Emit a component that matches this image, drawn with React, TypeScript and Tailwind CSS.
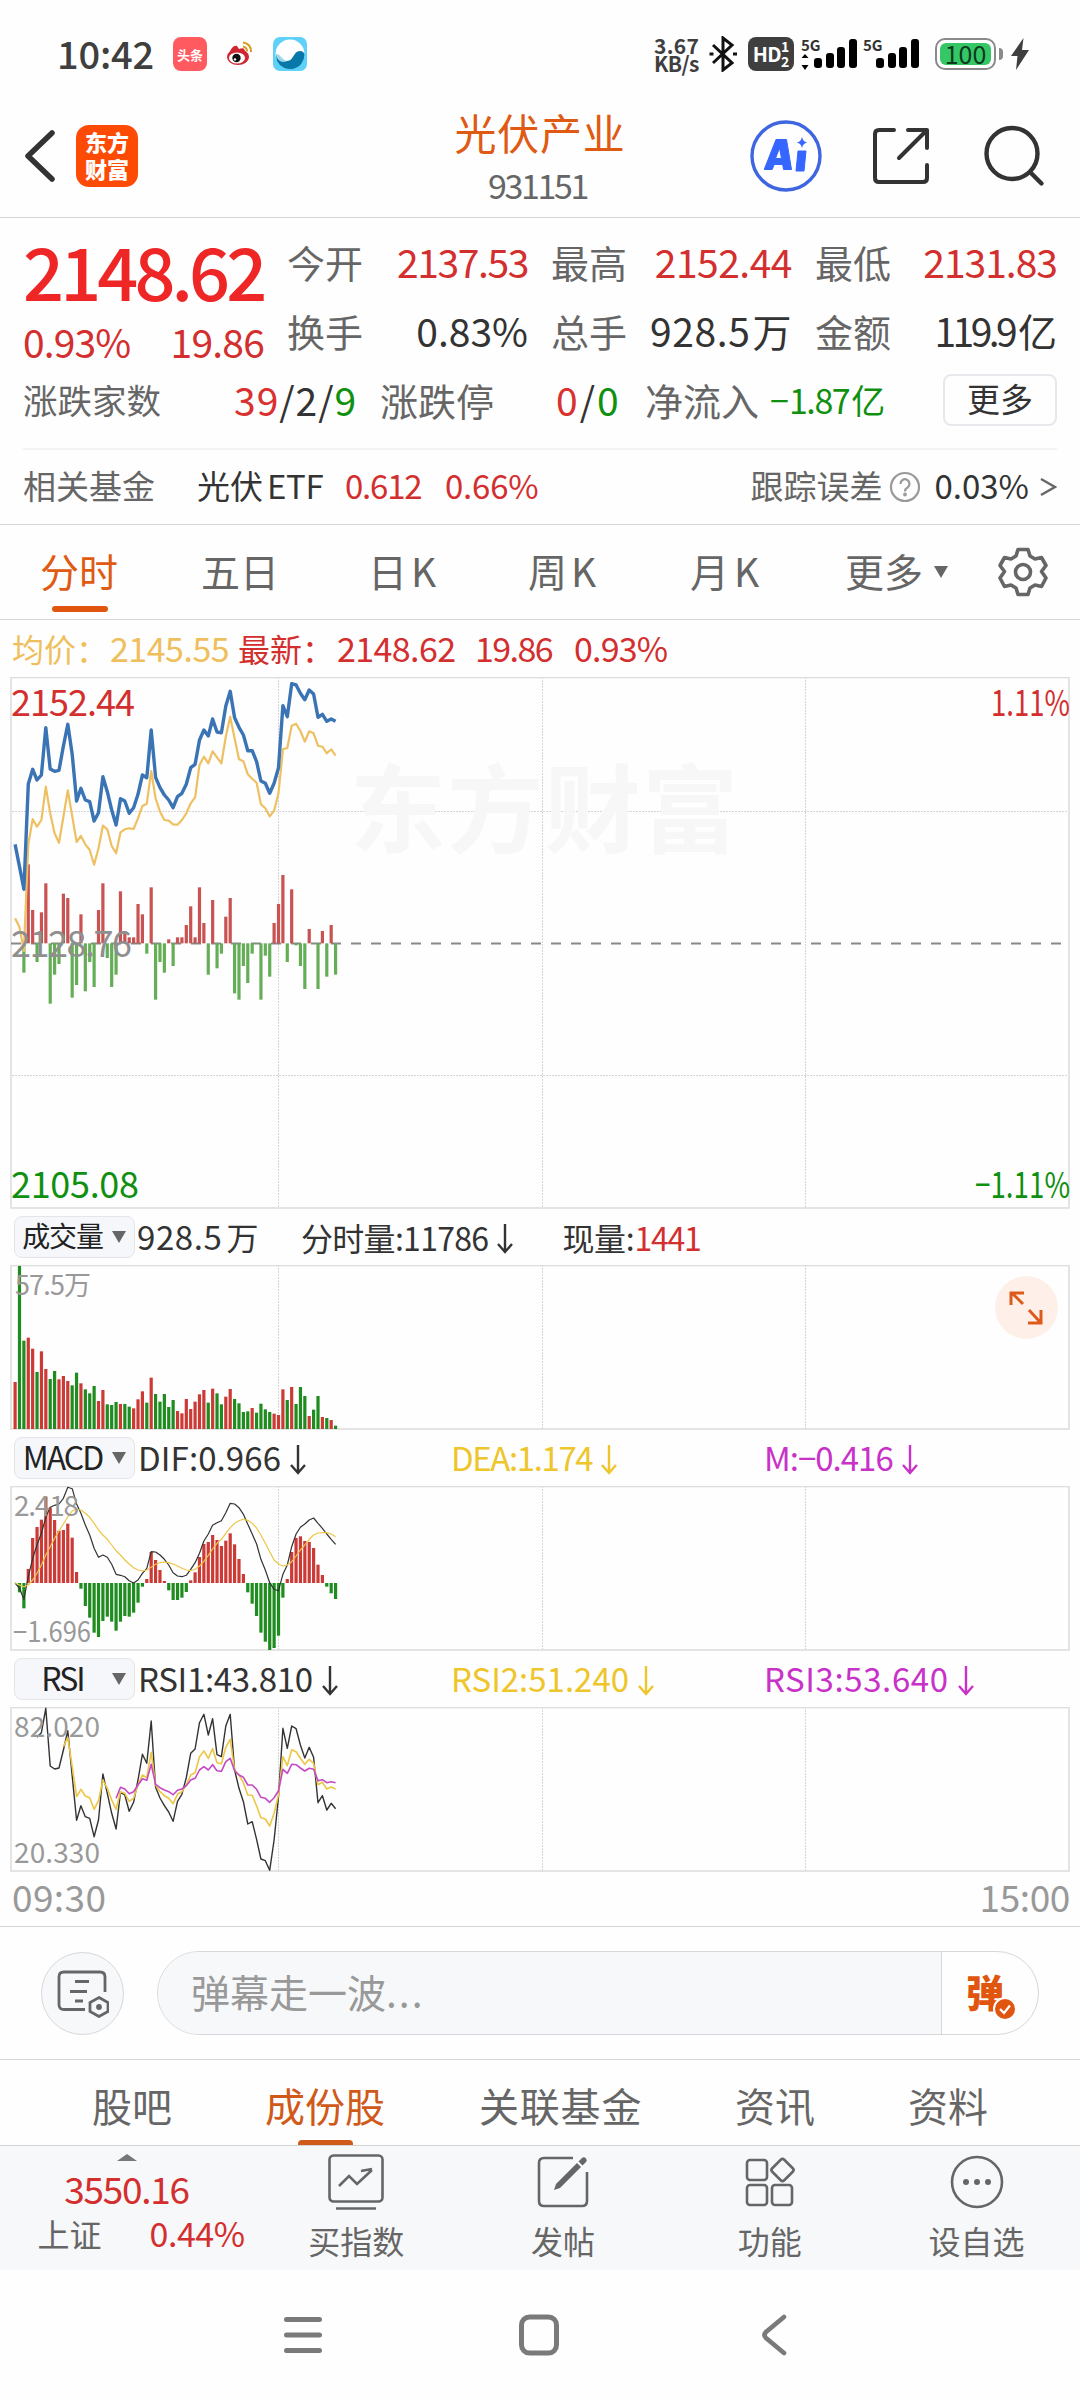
import type { ReactNode } from 'react'
import clsx from 'clsx'

const RED = '#cc3a36'
const GREEN = '#1e8c1e'

// chart samples, one per minute since 09:30, in thirds of a pixel
const PRICE = [523, 590, 658, 342, 298, 330, 315, 173, 297, 304, 301, 228, 163, 253, 393, 355, 390, 395, 453, 428, 320, 365, 420, 465, 386, 393, 430, 413, 373, 315, 323, 180, 322, 353, 375, 390, 413, 380, 370, 343, 293, 283, 210, 180, 198, 147, 186, 188, 108, 64, 143, 172, 195, 242, 242, 275, 333, 340, 370, 340, 293, 107, 140, 41, 45, 70, 89, 60, 72, 142, 133, 154, 147, 154]
const AVERAGE = [745, 772, 843, 523, 447, 470, 450, 350, 430, 490, 518, 440, 361, 438, 516, 498, 523, 540, 584, 535, 467, 478, 528, 550, 487, 478, 475, 477, 445, 408, 401, 303, 385, 425, 450, 452, 463, 464, 450, 430, 400, 382, 285, 260, 280, 244, 262, 280, 200, 140, 205, 268, 274, 313, 326, 338, 403, 415, 439, 422, 370, 238, 234, 167, 161, 183, 215, 184, 190, 227, 230, 250, 238, 257]
const DELTA = [820, 820, 908, 583, 720, 876, 727, 640, 1001, 914, 882, 671, 684, 983, 945, 733, 964, 876, 951, 720, 640, 864, 951, 914, 664, 783, 802, 802, 702, 733, 851, 652, 989, 876, 908, 808, 888, 802, 802, 765, 709, 802, 652, 759, 914, 690, 895, 851, 740, 684, 970, 989, 888, 939, 851, 820, 989, 857, 920, 759, 702, 615, 876, 658, 826, 888, 957, 777, 820, 957, 783, 920, 765, 914]
const VOLUME = [576, 228, 452, 443, 476, 546, 484, 537, 567, 543, 568, 558, 573, 586, 548, 580, 598, 610, 588, 633, 600, 643, 645, 636, 642, 642, 650, 655, 628, 604, 638, 563, 612, 635, 612, 651, 630, 663, 670, 627, 657, 635, 613, 600, 638, 596, 610, 643, 620, 597, 627, 640, 666, 664, 654, 668, 641, 658, 666, 671, 675, 598, 630, 591, 642, 591, 618, 678, 659, 618, 681, 684, 690, 707]
const VOLUME_SIDE = 'rggrrgrrggrrrggrgggrrgggrggrrrgrgggggrrrrrrrgrggrrggggrggggrrrgrgggrggrgrg'
const MACD = [459, 487, 535, 417, 324, 291, 269, 200, 233, 270, 302, 300, 281, 323, 426, 476, 528, 563, 608, 621, 573, 560, 575, 602, 575, 558, 560, 548, 518, 470, 447, 366, 390, 420, 453, 481, 510, 510, 503, 486, 451, 427, 381, 342, 336, 315, 330, 348, 332, 310, 343, 387, 432, 487, 521, 558, 608, 635, 660, 654, 617, 503, 447, 366, 324, 319, 333, 336, 354, 404, 435, 470, 490, 507]
const DIF = [459, 475, 508, 440, 385, 345, 310, 262, 232, 226, 222, 205, 172, 176, 222, 250, 285, 315, 355, 382, 375, 382, 403, 433, 436, 440, 452, 459, 450, 430, 415, 365, 366, 375, 388, 405, 428, 438, 440, 436, 418, 398, 370, 333, 312, 286, 278, 272, 248, 220, 222, 233, 253, 283, 312, 342, 388, 420, 458, 478, 482, 433, 405, 350, 312, 292, 282, 270, 264, 280, 295, 312, 328, 343]
const DEA = [459, 465, 470, 465, 450, 430, 405, 375, 350, 325, 303, 282, 260, 243, 238, 240, 250, 262, 280, 300, 315, 328, 345, 362, 375, 390, 402, 413, 420, 423, 420, 412, 403, 398, 396, 398, 402, 408, 415, 420, 422, 418, 408, 394, 376, 357, 340, 328, 310, 293, 280, 272, 268, 271, 280, 294, 315, 340, 365, 390, 402, 408, 405, 395, 378, 360, 345, 328, 315, 309, 308, 308, 312, 320]
const RSI1 = [262, 248, 175, 348, 357, 354, 300, 242, 378, 511, 467, 500, 505, 560, 510, 372, 430, 490, 537, 427, 435, 484, 457, 390, 313, 340, 213, 412, 444, 467, 486, 514, 454, 433, 383, 310, 297, 218, 193, 255, 206, 314, 320, 228, 193, 360, 415, 455, 522, 515, 568, 627, 632, 661, 570, 440, 235, 295, 228, 236, 285, 324, 292, 322, 458, 437, 480, 460, 476]
const RSI2 = [290, 262, 350, 440, 418, 438, 443, 478, 452, 390, 415, 450, 478, 425, 430, 454, 445, 405, 375, 383, 307, 405, 425, 437, 445, 461, 433, 425, 405, 375, 368, 320, 303, 325, 296, 338, 341, 292, 268, 360, 375, 398, 435, 436, 468, 503, 507, 528, 490, 435, 320, 347, 299, 305, 325, 343, 328, 340, 404, 397, 417, 411, 417]
const RSI3 = [445, 412, 417, 431, 425, 405, 386, 391, 343, 403, 413, 420, 425, 434, 421, 417, 407, 390, 385, 360, 350, 360, 344, 362, 364, 335, 325, 362, 375, 382, 405, 405, 418, 442, 445, 457, 443, 422, 358, 370, 343, 344, 354, 363, 355, 358, 392, 389, 398, 395, 398]

const xAt = (i: number) => 15.1 + i * 4.39

interface SeriesProps {
    data: number[]
    top: number
    from?: number
    color: string
    width: number
}

function Series({ data, top, from = 0, color, width }: SeriesProps) {
    const points = data.map((v, i) => `${xAt(i + from).toFixed(1)},${(v / 3 - top).toFixed(1)}`).join(' ')
    return <polyline points={points} fill="none" stroke={color} strokeWidth={width} strokeLinejoin="round" />
}

interface BarsProps {
    data: number[]
    top: number
    base: number
    up: string
    down: string
    side?: string
}

function Bars({ data, top, base, up, down, side }: BarsProps) {
    return (
        <>
            {data.map((v, i) => {
                const isUp = side ? side[i] === 'r' : v < base
                return (
                    <rect
                        key={i}
                        x={xAt(i) - 1.6}
                        y={Math.min(v, base) / 3 - top}
                        width={3.2}
                        height={Math.abs(v - base) / 3}
                        fill={isUp ? up : down}
                    />
                )
            })}
        </>
    )
}

function Chart({ height, rows = [], children }: { height: number; rows?: number[]; children: ReactNode }) {
    return (
        <svg width="1080" height={height} viewBox={`0 0 1080 ${height}`} className="block shrink-0">
            <g stroke="#d4d4d4" strokeWidth="1" strokeDasharray="2 1">
                {[278.5, 542.5, 805.5].map((x) => (
                    <line key={x} x1={x} x2={x} y1="0" y2={height} />
                ))}
                {rows.map((y) => (
                    <line key={y} x1="12" x2="1068" y1={y} y2={y} />
                ))}
            </g>
            <rect x="11" y="0.5" width="1058" height={height - 1.5} fill="none" stroke="#dedede" strokeWidth="1.6" />
            {children}
        </svg>
    )
}

function StatusBar() {
    return (
        <div className="flex h-[108px] items-center pl-[57px] pr-[51px]">
            <span className="w-[116px] pb-[2px] text-[38px] font-medium leading-none tracking-[-0.2px] text-[#3f3f3f]">10:42</span>
            <div className="flex h-[34px] w-[34px] items-center justify-center rounded-[8px] bg-[#ff5a60] text-[13px] font-bold leading-none text-white">
                头条
            </div>
            <svg width="28" height="26" viewBox="0 0 28 26" className="ml-[19px]">
                <ellipse cx="12" cy="16" rx="11" ry="8" fill="#cf2630" />
                <path d="M3 13 C5 7 8 4 11 5 L13 8 C18 6 19 8 19 12Z" fill="#cf2630" />
                <ellipse cx="11" cy="17" rx="8" ry="5.6" fill="#fff" />
                <circle cx="10.5" cy="17" r="4.2" fill="#111" />
                <circle cx="9" cy="18.4" r="1.2" fill="#fff" />
                <path d="M17 1.5 a8.5 8.5 0 0 1 8 9.5 M17 5.5 a4.5 4.5 0 0 1 4 5" fill="none" stroke="#d99a20" strokeWidth="2" />
            </svg>
            <svg width="34" height="34" viewBox="0 0 34 34" className="ml-[19px]">
                <rect width="34" height="34" rx="7" fill="#5fd0f7" />
                <circle cx="17" cy="17" r="14.5" fill="#fff" />
                <path d="M3 19 C7 17 9 24 14 24 C21 24 20 14 27 14 C30 14 31 16 31.500 17 A14.500 14.500 0 0 1 4 24Z" fill="#0878a8" />
                <path d="M2.600 17 C7 16 9 23 14 24 C9 27 4 23 2.600 17Z" fill="#9ad8ea" />
            </svg>

            <div className="ml-auto flex items-center">
                <div className="flex w-[55px] flex-col text-[21px] font-bold leading-[18px] text-[#3f3f3f]">
                    <span className="tracking-[0.3px]">3.67</span>
                    <span className="tracking-[-0.6px]">KB/s</span>
                </div>
                <svg width="28" height="36" viewBox="0 0 28 36" fill="none" stroke="#111" strokeWidth="3">
                    <path d="M4 9 L23 27 L14 34 V2 L23 9 L4 27" />
                    <path d="M0.500 18 h4 M24 18 h4" />
                </svg>
                <div className="ml-[11px] flex h-[34px] w-[46px] items-center justify-center rounded-[8px] bg-[#3f3f3f] text-white">
                    <span className="pb-[1px] text-[20px] font-bold leading-none tracking-[-0.5px]">HD</span>
                    <span className="text-[14px] font-bold leading-[15px]">1<br />2</span>
                </div>
                <svg width="122" height="34" viewBox="0 0 122 34" className="ml-[7px] overflow-visible" fill="#000">
                    <text x="0" y="13.500" fontSize="15" fontWeight="600" fill="#333">5G</text>
                    <path d="M4 18 l3.500 4 h-7z M4 34 l3.500 -5 h-7z" transform="translate(0 -1)" />
                    <rect x="13" y="21" width="8" height="10" rx="3" />
                    <rect x="25" y="16" width="8" height="15" rx="3" />
                    <rect x="36" y="10" width="8" height="21" rx="3" />
                    <rect x="48" y="2" width="8" height="29" rx="3" />
                    <text x="62" y="13.500" fontSize="15" fontWeight="600" fill="#333">5G</text>
                    <rect x="75" y="21" width="8" height="10" rx="3" />
                    <rect x="87" y="16" width="8" height="15" rx="3" />
                    <rect x="98" y="10" width="8" height="21" rx="3" />
                    <rect x="110" y="2" width="8" height="29" rx="3" />
                </svg>
                <div className="ml-[12px] flex h-[32px] w-[61px] rounded-[10px] border-[2px] border-[#8a8a8a] p-[3px]">
                    <div className="flex h-full w-full items-center justify-center rounded-[6px] bg-[#35c766] pb-[2px] text-[25px] leading-none text-[#0d3a1c]">
                        100
                    </div>
                </div>
                <div className="ml-[3px] h-[12px] w-[4px] rounded-r-full bg-[#8a8a8a]"></div>
                <svg width="18" height="32" viewBox="0 0 18 32" className="ml-[8px]">
                    <path d="M12.500 0 L0 18 h6.500 L5 32 L18 12 h-7z" fill="#3f3f3f" />
                </svg>
            </div>
        </div>
    )
}

function Header() {
    return (
        <div className="relative flex h-[110px] items-center border-b border-[#d4d4d4] pb-[13px] pl-[24px] pr-[35px]">
            <svg width="32" height="52" viewBox="0 0 32 52">
                <path d="M28 3 L4 26 L28 49" fill="none" stroke="#333" strokeWidth="5.500" strokeLinecap="round" strokeLinejoin="round" />
            </svg>
            <div className="ml-[20px] flex h-[62px] w-[62px] flex-col items-center justify-center rounded-[13px] bg-[#fd4a05] pb-[3px] text-[22px] font-black leading-[27px] text-white">
                <span>东方</span>
                <span>财富</span>
            </div>
            <div className="absolute inset-x-0 top-0 flex flex-col items-center">
                <span className="mt-[2px] text-[42px] leading-[44px] tracking-[0.8px] text-[#df5a12]">光伏产业</span>
                <span className="-ml-[5px] mt-[14px] text-[34px] leading-[34px] tracking-[-2.4px] text-[#666]">931151</span>
            </div>
            <svg width="72" height="72" viewBox="0 0 72 72" className="ml-auto">
                <circle cx="36" cy="36" r="34" fill="none" stroke="#3f66e0" strokeWidth="3.400" />
                <path d="M26 19.500 h10.500 l5 30 h-8 l-0.800 -5 h-8.500 l-2 5 h-8z M29.500 28 l-4 10.500 h6z" fill="#3566ff" fillRule="evenodd" stroke="#3566ff" strokeLinejoin="round" />
                <path d="M48 31 h8 l-2 20 h-8z" fill="#3566ff" stroke="#3566ff" strokeLinejoin="round" />
                <path d="M52 17 q1 5 5.500 5.500 q-4.500 0.500 -5.500 5.500 q-1 -5 -5.500 -5.500 q4.500 -0.500 5.500 -5.500z" fill="#3566ff" />
            </svg>
            <svg width="58" height="60" viewBox="0 0 58 60" className="ml-[50px]" fill="none" stroke="#333" strokeWidth="4" strokeLinecap="round" strokeLinejoin="round">
                <path d="M22 4 H7 Q3 4 3 8 V52 Q3 56 7 56 H51 Q55 56 55 52 V39 M36 4 H55 V22 M54 5 L27 32" />
            </svg>
            <svg width="62" height="62" viewBox="0 0 62 62" className="ml-[53px]" fill="none" stroke="#333" strokeWidth="4.400" strokeLinecap="round">
                <circle cx="29" cy="28.500" r="25.500" />
                <path d="M47 47 L58.500 58.500" />
            </svg>
        </div>
    )
}

function Quote() {
    return (
        <div className="h-[306px] px-[23px]">
            <div className="flex h-[150px] pt-[9px]">
                <div className="w-[264px]">
                    <div className="h-[85px] pt-[4px] text-[72px] font-medium leading-[78px] tracking-[-3.9px] text-[#ef2626]">2148.62</div>
                    <div className="flex w-[241px] justify-between text-[39px] leading-[58px] text-[#d32f2f]">
                        <span className="tracking-[-0.9px]">0.93%</span>
                        <span className="tracking-[-0.8px]">19.86</span>
                    </div>
                </div>
                <div className="grid grow grid-cols-[241px_241px_1fr] content-start gap-x-[23px] text-[39px] leading-[69px] text-[#333]">
                    <div className="flex justify-between">
                        <span className="text-[38px] text-[#666]">今开</span>
                        <span className="tracking-[-1.4px] text-[#d32f2f]">2137.53</span>
                    </div>
                    <div className="flex justify-between">
                        <span className="text-[38px] text-[#666]">最高</span>
                        <span className="tracking-[-0.5px] text-[#d32f2f]">2152.44</span>
                    </div>
                    <div className="flex justify-between">
                        <span className="text-[38px] text-[#666]">最低</span>
                        <span className="tracking-[-1px] text-[#d32f2f]">2131.83</span>
                    </div>
                    <div className="flex justify-between">
                        <span className="text-[38px] text-[#666]">换手</span>
                        <span>0.83%</span>
                    </div>
                    <div className="flex justify-between">
                        <span className="text-[38px] text-[#666]">总手</span>
                        <span className="tracking-[0.6px]">928.5<span className="ml-[2px]">万</span></span>
                    </div>
                    <div className="flex justify-between">
                        <span className="text-[38px] text-[#666]">金额</span>
                        <span><span className="tracking-[-3.6px]">119.9</span><span className="ml-[4px]">亿</span></span>
                    </div>
                </div>
            </div>
            <div className="flex h-[66px] items-center pb-[3px] text-[38px] leading-none text-[#666]">
                <span className="w-[211px] text-[34.5px]">涨跌家数</span>
                <span className="w-[146px] text-[39px] tracking-[1px] text-[#333]">
                    <span className="text-[#d93030]">39</span>/2/<span className="text-[#109010]">9</span>
                </span>
                <span className="w-[176px]">涨跌停</span>
                <span className="w-[89px] text-[39px] tracking-[2px] text-[#333]">
                    <span className="text-[#d93030]">0</span>/<span className="text-[#109010]">0</span>
                </span>
                <span className="w-[125px]">净流入</span>
                <span className="text-[34px] text-[#109010]">−<span className="tracking-[-1.4px]">1.87</span><span className="ml-[2px]">亿</span></span>
                <div className="ml-auto flex h-[52px] w-[114px] items-center justify-center rounded-[8px] border-2 border-[#e6e8eb] pb-[3px] text-[33px] text-[#333]">
                    更多
                </div>
            </div>
            <div className="mt-[14px] flex h-[76px] items-center border-t-2 border-[#f3f3f3] pb-[3px] text-[33px] leading-none text-[#666]">
                <span className="w-[174px]">相关基金</span>
                <span className="w-[148px] text-[#333]">光伏<span className="ml-[4px] tracking-[-0.4px]">ETF</span></span>
                <span className="w-[100px] tracking-[-1.2px] text-[#d32f2f]">0.612</span>
                <span className="tracking-[-0.2px] text-[#d32f2f]">0.66%</span>
                <span className="ml-auto">跟踪误差</span>
                <svg width="32" height="32" viewBox="0 0 32 32" className="ml-[7px] mt-[3px]" fill="none" stroke="#999" strokeWidth="2.200">
                    <circle cx="16" cy="16" r="14" />
                    <path d="M11.500 13 a4.500 4.500 0 1 1 7 3.500 q-2.500 1.500 -2.500 4" />
                    <circle cx="16" cy="23.500" r="0.800" />
                </svg>
                <span className="ml-[13px] text-[#333]">0.03%</span>
                <svg width="18" height="20" viewBox="0 0 18 20" className="ml-[10px] mt-[3px]">
                    <path d="M2 2 L16 10 L2 18" fill="none" stroke="#666" strokeWidth="2.400" />
                </svg>
            </div>
        </div>
    )
}

function PeriodTabs() {
    return (
        <div className="flex h-[96px] items-center border-y border-[#d4d4d4] pl-[40px] text-[39px] leading-none text-[#666]">
            <div className="relative w-[161px] pb-[4px] text-[#df5a12]">
                分时
                <div className="absolute -bottom-[18px] left-[12px] h-[6px] w-[56px] rounded-full bg-[#e0560f]"></div>
            </div>
            <span className="w-[167px] pb-[4px]">五日</span>
            <span className="w-[160px] pb-[4px]">日<span className="ml-[4px]">K</span></span>
            <span className="w-[162px] pb-[4px]">周<span className="ml-[4px]">K</span></span>
            <span className="w-[155px] pb-[4px]">月<span className="ml-[5px]">K</span></span>
            <span className="pb-[4px]">更多</span>
            <svg width="14" height="12" viewBox="0 0 14 12" className="ml-[11px]">
                <path d="M0 0 H14 L7 12Z" fill="#666" />
            </svg>
            <svg width="50" height="50" viewBox="0 0 50 50" className="ml-[50px]" fill="none" stroke="#666" strokeWidth="3.600" strokeLinejoin="round">
                <path d="M20 2.500 H30 L32 9 L37 12 L43.500 10.500 L48 18.500 L43.500 24.500 L48 31 L43.500 39.500 L37 38 L32 41 L30 47.500 H20 L18 41 L13 38 L6.500 39.500 L2 31 L6.500 24.500 L2 18.500 L6.500 10.500 L13 12 L18 9Z" />
                <circle cx="25" cy="25" r="7.500" />
            </svg>
        </div>
    )
}

function Down({ color }: { color: string }) {
    return (
        <svg width="18" height="32" viewBox="0 0 18 32" className="mt-[4px] ml-[8px]">
            <path d="M9 1 V29 M2 21 L9 29 L16 21" fill="none" stroke={color} strokeWidth="2.400" />
        </svg>
    )
}

function Pill({ label, small }: { label: string; small?: boolean }) {
    return (
        <div className="flex h-[42px] w-[121px] items-center rounded-[8px] border border-[#e4e5e8] bg-[#f6f7fa] pr-[8px] text-[#222]">
            <span className={clsx('grow pb-[4px] pr-[2px] text-center leading-none', small ? 'text-[28px] tracking-[-1.2px]' : 'text-[32px] tracking-[-2px]')}>
                {label}
            </span>
            <svg width="14" height="12" viewBox="0 0 14 12">
                <path d="M0 0 H14 L7 12Z" fill="#666" />
            </svg>
        </div>
    )
}

function IndicatorRow({ label, small, children }: { label: string; small?: boolean; children: ReactNode }) {
    return (
        <div className="flex h-[56px] items-center pb-[1px] pl-[14px] text-[33px] leading-none text-[#333]">
            <Pill label={label} small={small} />
            {children}
        </div>
    )
}

function DanmuBar() {
    return (
        <div className="flex h-[133px] items-center border-t border-[#d4d4d4] pl-[41px]">
            <div className="flex h-[83px] w-[83px] items-center justify-center rounded-full border border-[#d6d8dc] bg-[#f7f8fa]">
                <svg width="52" height="50" viewBox="0 0 52 50" fill="none" stroke="#666" strokeWidth="2.800">
                    <path d="M28 41.500 H7 Q2 41.500 2 36.500 V9 Q2 4 7 4 H43 Q48 4 48 9 V24" />
                    <path d="M18 13.500 H32 M13 23.500 H30 M18 33 H26" />
                    <path d="M42 29.500 L51 34.500 V43.500 L42 48.500 L33 43.500 V34.500Z" />
                    <circle cx="42" cy="39" r="1.500" fill="#666" />
                </svg>
            </div>
            <div className="ml-[33px] flex h-[84px] w-[882px] overflow-hidden rounded-full border border-[#d6d8dc]">
                <div className="flex w-[784px] items-center border-r border-[#d6d8dc] bg-[#f7f8fa] pb-[4px] pl-[33px] text-[39px] leading-none text-[#999]">
                    弹幕走一波<span className="tracking-[2px]">...</span>
                </div>
                <div className="relative flex grow items-center pb-[4px] pl-[24px] text-[38px] font-black leading-none text-[#e0560f]">
                    弹
                    <svg width="24" height="24" viewBox="0 0 24 24" className="absolute left-[51px] top-[45px]">
                        <circle cx="12" cy="12" r="11" fill="#e0560f" stroke="#fff" strokeWidth="2" />
                        <path d="M7 12 L11 16 L17 8.500" fill="none" stroke="#fff" strokeWidth="2.200" />
                    </svg>
                </div>
            </div>
        </div>
    )
}

function SectionTabs() {
    return (
        <div className="flex h-[86px] items-center border-t border-[#d4d4d4] pl-[92px] text-[40px] leading-none text-[#666]">
            <span className="w-[173px] pt-[4px]">股吧</span>
            <div className="relative flex h-full w-[214px] items-center pt-[4px] text-[#cf5a1a]">
                成份股
                <div className="absolute bottom-0 left-[33px] h-[5px] w-[55px] rounded-t-[4px] bg-[#cf5a1a]"></div>
            </div>
            <span className="w-[256px] pt-[4px] tracking-[0.8px]">关联基金</span>
            <span className="w-[173px] pt-[4px]">资讯</span>
            <span className="pt-[4px]">资料</span>
        </div>
    )
}

function Action({ label, children }: { label: string; children: ReactNode }) {
    return (
        <div className="flex w-[206.75px] flex-col items-center">
            <svg width="58" height="60" viewBox="0 0 58 60" className="mt-[7px]" fill="none" stroke="#666" strokeWidth="2.600">
                {children}
            </svg>
            <span className="mt-[10px] leading-[34px]">{label}</span>
        </div>
    )
}

function BottomBar() {
    return (
        <div className="flex h-[125px] border-t border-[#d4d4d4] bg-[#f7f8fa] text-[32px] text-[#666]">
            <div className="flex w-[253px] flex-col items-center">
                <svg width="20" height="7" viewBox="0 0 20 7" className="mt-[8px]">
                    <path d="M10 0 L20 7 H0Z" fill="#777" />
                </svg>
                <span className="mt-[8px] text-[37px] leading-[38px] tracking-[-1.3px] text-[#d32f2f]">3550.16</span>
                <div className="ml-[29px] mt-[8px] flex w-[207px] justify-between leading-[36px]">
                    <span>上证</span>
                    <span className="text-[34px] tracking-[-0.5px] text-[#d32f2f]">0.44%</span>
                </div>
            </div>
            <Action label="买指数">
                <rect x="2.500" y="2.500" width="53" height="46" rx="4" />
                <path d="M12 33 L22 23 L30 31 L45 17 M34 18 L45 16" />
                <path d="M9 55.500 H49" />
            </Action>
            <Action label="发帖">
                <path d="M39 5 H10 Q5 5 5 10 V48 Q5 53 10 53 H48 Q53 53 53 48 V19" />
                <path d="M20 37 L22 31 L43 10 L47 14 L26 35Z" fill="#666" stroke="none" />
                <path d="M44.500 8.500 L48 5 Q50 3.500 52 5.500 Q53.500 7.500 52 9 L48.500 12.500Z" fill="#666" stroke="none" />
            </Action>
            <Action label="功能">
                <rect x="6" y="7" width="20" height="20" rx="3" />
                <rect x="6" y="32" width="20" height="20" rx="3" />
                <rect x="31" y="32" width="20" height="20" rx="3" />
                <rect x="33" y="8.500" width="17" height="17" rx="2.500" transform="rotate(45 41.500 17)" />
            </Action>
            <Action label="设自选">
                <circle cx="29" cy="29" r="25" />
                <g fill="#666" stroke="none">
                    <circle cx="18" cy="29" r="3" />
                    <circle cx="29" cy="29" r="3" />
                    <circle cx="40" cy="29" r="3" />
                </g>
            </Action>
        </div>
    )
}

function SystemNav() {
    return (
        <div className="flex h-[130px] items-center pl-[284px]">
            <svg width="38" height="38" viewBox="0 0 38 38" stroke="#7a7a7a" strokeWidth="5" strokeLinecap="round">
                <path d="M2.500 3.500 H35.500 M2.500 19 H35.500 M2.500 34.500 H35.500" />
            </svg>
            <svg width="40" height="42" viewBox="0 0 40 42" className="ml-[197px]">
                <rect x="2.500" y="3" width="35" height="36" rx="8" fill="none" stroke="#7a7a7a" strokeWidth="5" />
            </svg>
            <svg width="26" height="42" viewBox="0 0 26 42" className="ml-[202px]">
                <path d="M23 3 L5 18 Q2 21 5 24 L23 39" fill="none" stroke="#7a7a7a" strokeWidth="4.600" strokeLinecap="round" />
            </svg>
        </div>
    )
}

export default function App() {
    return (
        <div className="flex h-[2400px] w-[1080px] flex-col overflow-hidden whitespace-nowrap bg-[#fefefe] font-['Noto_Sans_CJK_SC','Noto_Sans',sans-serif]">
            <StatusBar />
            <Header />
            <Quote />
            <PeriodTabs />

            <div className="flex h-[57px] items-center pb-[1px] pl-[12px] text-[34px] leading-none text-[#d32f2f]">
                <span className="w-[98px] text-[32px] text-[#eebf5c]">均价：</span>
                <span className="w-[128px] tracking-[-0.5px] text-[#eebf5c]">2145.55</span>
                <span className="w-[99px] text-[32px]">最新：</span>
                <span className="w-[138px] tracking-[-0.6px]">2148.62</span>
                <span className="w-[99px] tracking-[-1.6px]">19.86</span>
                <span className="tracking-[-0.8px]">0.93%</span>
            </div>

            <Chart height={532} rows={[134.5, 398.5]}>
                <text x="350" y="168" fontSize="96" fontWeight="700" fill="#f7f7f7" textLength="388">东方财富</text>
                <path d="M11 266.500 H1068" stroke="#888" strokeWidth="1.800" strokeDasharray="10 10" />
                <Bars data={DELTA} top={7} base={820} up="#c95252" down="#66ad58" />
                <Series data={AVERAGE} top={7} color="#efc061" width={2.2} />
                <Series data={PRICE} top={7} color="#3a74b4" width={3.4} />
                <g fontSize="36">
                    <text x="11" y="39" fill="#d32f2f" textLength="124">2152.44</text>
                    <text x="11" y="280" fill="#8f8f8f" textLength="121">2128.76</text>
                    <text x="11" y="521" fill="#109010" textLength="128">2105.08</text>
                    <text x="991" y="39" fill="#d32f2f" textLength="79" lengthAdjust="spacingAndGlyphs">1.11%</text>
                    <text x="975" y="521" fill="#109010" textLength="95" lengthAdjust="spacingAndGlyphs">−1.11%</text>
                </g>
            </Chart>

            <IndicatorRow label="成交量" small>
                <span className="ml-[2px] w-[164px] tracking-[0.6px]">928.5<span className="ml-[4px] text-[32px]">万</span></span>
                <span className="text-[32px] tracking-[-0.7px]">分时量:11786</span>
                <Down color="#333" />
                <span className="ml-[48px] text-[32px] tracking-[-0.3px]">现量:<span className="tracking-[-1.2px] text-[#d32f2f]">1441</span></span>
            </IndicatorRow>
            <Chart height={165}>
                <Bars data={VOLUME} top={75} base={717} up={RED} down={GREEN} side={VOLUME_SIDE} />
                <text x="15" y="30" fontSize="27" fill="#999" textLength="76">57.5万</text>
                <circle cx="1026.500" cy="42.500" r="31.500" fill="#fef0e9" />
                <path d="M1023 39 L1012 28 M1011 40 V28 H1024 M1029 45 L1040 57 M1041 45 V58 H1028" fill="none" stroke="#dd5a1c" strokeWidth="3" />
            </Chart>

            <IndicatorRow label="MACD">
                <span className="ml-[3px] tracking-[0.1px]">DIF:0.966</span>
                <Down color="#333" />
                <div className="ml-auto flex w-[313px] items-center tracking-[-1.4px] text-[#eec52a]">DEA:1.174<Down color="#eec52a" /></div>
                <div className="flex w-[316px] items-center tracking-[-1px] text-[#c832c8]">M:−0.416<Down color="#c832c8" /></div>
            </IndicatorRow>
            <Chart height={165}>
                <Bars data={MACD} top={56} base={459} up={RED} down={GREEN} />
                <Series data={DIF} top={56} color="#333" width={1.2} />
                <Series data={DEA} top={56} color="#edc644" width={1.2} />
                <g fontSize="28" fill="#999">
                    <text x="14" y="30" textLength="65">2.418</text>
                    <text x="13" y="156" textLength="78" lengthAdjust="spacingAndGlyphs">−1.696</text>
                </g>
            </Chart>

            <IndicatorRow label="RSI">
                <span className="ml-[3px] tracking-[-0.3px]">RSI1:43.810</span>
                <Down color="#333" />
                <div className="ml-auto flex w-[313px] items-center text-[#eec52a]">RSI2:51.240<Down color="#eec52a" /></div>
                <div className="flex w-[316px] items-center tracking-[0.6px] text-[#c832c8]">RSI3:53.640<Down color="#c832c8" /></div>
            </IndicatorRow>
            <Chart height={165}>
                <Series data={RSI1} top={57} from={5} color="#333" width={1.4} />
                <Series data={RSI2} top={57} from={11} color="#edc644" width={1.6} />
                <Series data={RSI3} top={57} from={23} color="#c44ac4" width={1.6} />
                <g fontSize="28" fill="#999">
                    <text x="14" y="30" textLength="86">82.020</text>
                    <text x="14" y="156" textLength="86">20.330</text>
                </g>
            </Chart>

            <div className="flex h-[54px] items-center justify-between pb-[5px] pl-[12px] pr-[10px] text-[37px] leading-none text-[#999]">
                <span className="tracking-[0.4px]">09:30</span>
                <span className="tracking-[-0.4px]">15:00</span>
            </div>
            <DanmuBar />
            <SectionTabs />
            <BottomBar />
            <SystemNav />
        </div>
    )
}
